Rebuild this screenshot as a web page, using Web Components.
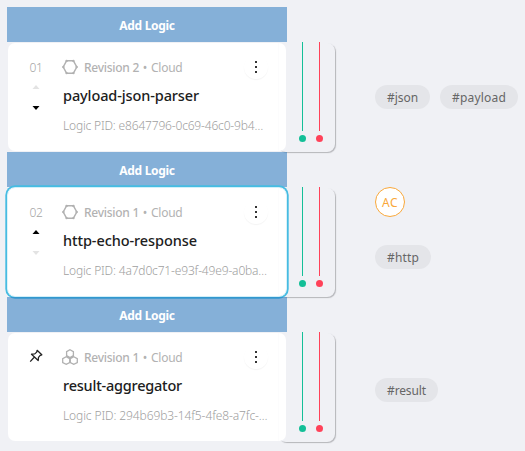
<!DOCTYPE html>
<html lang="en"><head><meta charset="utf-8"><title>Logic chain</title>
<style>html,body{margin:0;height:451px;overflow:hidden;background:#f0f1f5;font-family:"Noto Sans","Open Sans",sans-serif}</style></head>
<body>
<logic-chain>
<logic-row><add-logic slot="bar"></add-logic><logic-card slot="card" number="01" revision="2" name="payload-json-parser" name-width="136" pid="e8647796-0c69-46c0-9b4…" pid-width="200" first></logic-card>
<tag-list slot="side" style="padding-top:78px"><tag-pill text="#json" w="31"></tag-pill><tag-pill text="#payload" w="54"></tag-pill></tag-list></logic-row>
<logic-row><add-logic slot="bar"></add-logic><logic-card slot="card" number="02" revision="1" name="http-echo-response" name-width="134" pid="4a7d0c71-e93f-49e9-a0ba…" pid-width="204" selected></logic-card>
<user-badge slot="side"></user-badge><tag-list slot="side" style="padding-top:28px"><tag-pill text="#http" w="32"></tag-pill></tag-list></logic-row>
<logic-row><add-logic slot="bar"></add-logic><logic-card slot="card" revision="1" name="result-aggregator" name-width="119" pid="294b69b3-14f5-4fe8-a7fc-…" pid-width="204.5" pinned></logic-card>
<tag-list slot="side" style="padding-top:81px"><tag-pill text="#result" w="39"></tag-pill></tag-list></logic-row>
</logic-chain>
<script>
const shadow=(el,html)=>{el.attachShadow({mode:'open'}).innerHTML=html};
/* Text line whose tracking is adjusted to fill the width given in "w". */
class FitText extends HTMLElement{connectedCallback(){
 shadow(this,`<style>:host{display:block;white-space:nowrap;width:max-content}span{display:inline-block}</style><span></span>`);
 const s=this.shadowRoot.querySelector('span'),t=this.getAttribute('text');s.textContent=t;
 const w=+this.getAttribute('w');s.style.letterSpacing=(w-s.getBoundingClientRect().width)/t.length+'px';}}
class LogicChain extends HTMLElement{connectedCallback(){shadow(this,`<style>:host{display:flex;flex-direction:column;padding:7px 0 0 7px}</style><slot></slot>`)}}
class LogicRow extends HTMLElement{connectedCallback(){shadow(this,`<style>
:host{display:grid;grid-template-columns:280px 48px 1fr;grid-template-rows:35px 110px;height:145px}
.bar{grid-area:1/1;position:relative;z-index:1}
.card{grid-area:2/1;position:relative;z-index:1;padding:1px}
.ports{grid-area:2/1/3/3;justify-self:end;box-sizing:border-box;width:57px;height:109px;margin-top:1px;border-radius:8px;background:#f0f1f5;box-shadow:1px 1px 1px #b5b6ba;padding-left:21px;display:flex;gap:10px}
.port{width:7px;display:flex;flex-direction:column;align-items:center;gap:4px;color:#13bf97;margin-top:-1px}
.port.r{color:#ff4259}.port i{width:1px;height:89px;background:currentColor}.port b{width:7px;height:7px;border-radius:50%;background:currentColor}
.side{grid-area:1/3/3/4;padding-left:40px}
::slotted(user-badge){margin-top:35px}
</style><div class="bar"><slot name="bar"></slot></div><div class="ports"><div class="port"><i></i><b></b></div><div class="port r"><i></i><b></b></div></div><div class="card"><slot name="card"></slot></div><div class="side"><slot name="side"></slot></div>`)}}
class AddLogic extends HTMLElement{connectedCallback(){shadow(this,`<style>:host{display:flex;height:35px;align-items:center;justify-content:center;background:rgba(34,116,190,.52);color:#fff;font-size:12px;font-weight:700;line-height:16px}fit-text{margin-top:2px}</style><fit-text text="Add Logic" w="55.5"></fit-text>`)}}
class LogicCard extends HTMLElement{connectedCallback(){
 const a=n=>this.getAttribute(n),pin=this.hasAttribute('pinned'),first=this.hasAttribute('first');
 const hex=`<svg width="16" height="16" viewBox="0 0 16 16" fill="none" stroke="#b1b1b1" stroke-width="1.4"><path d="M4.6 1.8h6.8L14.8 8l-3.4 6.2H4.6L1.2 8z"/><g fill="#b1b1b1" stroke="none"><circle cx="4.6" cy="1.9" r="1.2"/><circle cx="11.4" cy="1.9" r="1.2"/><circle cx="14.6" cy="8" r="1.2"/><circle cx="11.4" cy="14.1" r="1.2"/><circle cx="4.6" cy="14.1" r="1.2"/><circle cx="1.4" cy="8" r="1.2"/></g></svg>`;
 const tri=`<svg width="16" height="16" viewBox="0 0 16 16" fill="none" stroke="#b1b1b1" stroke-width="1.3"><path d="M8 .7l3.4 2v3.9L8 8.5 4.6 6.6V2.7zM4.2 7.7l3.5 2v3.8l-3.5 1.8-3.5-1.8V9.7zM11.8 7.7l3.5 2v3.8l-3.5 1.8-3.5-1.8V9.7z"/></svg>`;
 const pinIcon=`<svg class="pin" width="14" height="14" viewBox="0 0 14 14" fill="none" stroke="#222" stroke-width="1.3" stroke-linejoin="round"><path d="M8.1 1.3l4.7 4.5-1.6.6-1.7 2-.3 3.1L2.5 5.2l3.3-.3 1.9-1.8zM5.2 8.3L1.2 12.6"/></svg>`;
 shadow(this,`<style>
:host{display:grid;grid-template-columns:55px 1fr;box-sizing:border-box;width:278px;height:108px;border-radius:7px;background:linear-gradient(90deg,#fff 270px,#fcfcfd 270px,#fcfcfd 271px,#fff 271px)}
:host([selected]){box-shadow:0 0 0 .8px #fff,0 0 0 2.7px #46bce2}
.left{display:flex;flex-direction:column;align-items:center;padding-left:1px}
.num{font-size:12px;line-height:16px;font-weight:300;color:#a5a5a5;margin-top:17px}
.arr{width:8px;height:4px}.up{margin-top:9px}.down{margin-top:17px}
.left svg{display:block}.pin{margin-top:16px}
.main{padding-top:16px}.top{display:flex;align-items:center;height:17px}.top svg{margin:-1px 6px 0 -1px;flex:none}
.rev,.cloud,.dot{font-size:12px;line-height:16px;color:#b2b2b2;margin-top:1px}.rev{font-weight:500}.dot{width:12px;text-align:center}.cloud{font-weight:400}
.more{width:24px;height:24px;border-radius:50%;box-shadow:0 1px 1px #f4f4f4;display:flex;flex-direction:column;align-items:center;justify-content:center;gap:3px;margin:-2px 0 0 61px}
.more i{width:2px;height:2px;background:#333}
.name{font-size:14.5px;line-height:20px;color:#202020;margin-top:9px;font-weight:500}
.pid{font-size:12px;line-height:16px;font-weight:300;color:#a0a0a0;margin-top:13px}
</style><div class="left">${pin?pinIcon:`<fit-text class="num" text="${a('number')}" w="13"></fit-text><svg class="arr up" viewBox="0 0 7 4"><path d="M0 4L3.5 0 7 4z" fill="${first?'#e3e3e3':'#000'}"/></svg><svg class="arr down" viewBox="0 0 7 4"><path d="M0 0L3.5 4 7 0z" fill="${first?'#000':'#e3e3e3'}"/></svg>`}</div>
<div class="main"><div class="top">${pin?tri:hex}<fit-text class="rev" text="Revision ${a('revision')}" w="55"></fit-text><span class="dot">•</span><fit-text class="cloud" text="Cloud" w="31.5"></fit-text><div class="more"><i></i><i></i><i></i></div></div>
<fit-text class="name" text="${a('name')}" w="${a('name-width')}"></fit-text><fit-text class="pid" text="Logic PID: ${a('pid')}" w="${a('pid-width')}"></fit-text></div>`)}}
class TagList extends HTMLElement{connectedCallback(){shadow(this,`<style>:host{display:flex;gap:10px}</style><slot></slot>`)}}
class TagPill extends HTMLElement{connectedCallback(){shadow(this,`<style>:host{display:block;height:24px;padding:0 12px;border-radius:12px;background:#e4e5e9;font-size:12px;line-height:25px;color:#666}</style><fit-text text="${this.getAttribute('text')}" w="${this.getAttribute('w')}"></fit-text>`)}}
class UserBadge extends HTMLElement{connectedCallback(){shadow(this,`<style>:host{display:flex;box-sizing:border-box;width:30px;height:30px;border:1px solid #f9a83a;border-radius:50%;background:#fff;align-items:center;justify-content:center;font-size:12px;line-height:16px;color:#f9a83a}fit-text{margin-top:1px}</style><fit-text text="AC" w="16"></fit-text>`)}}
for(const [n,c] of [['fit-text',FitText],['logic-chain',LogicChain],['logic-row',LogicRow],['add-logic',AddLogic],['logic-card',LogicCard],['tag-list',TagList],['tag-pill',TagPill],['user-badge',UserBadge]])customElements.define(n,c);
</script></body></html>
